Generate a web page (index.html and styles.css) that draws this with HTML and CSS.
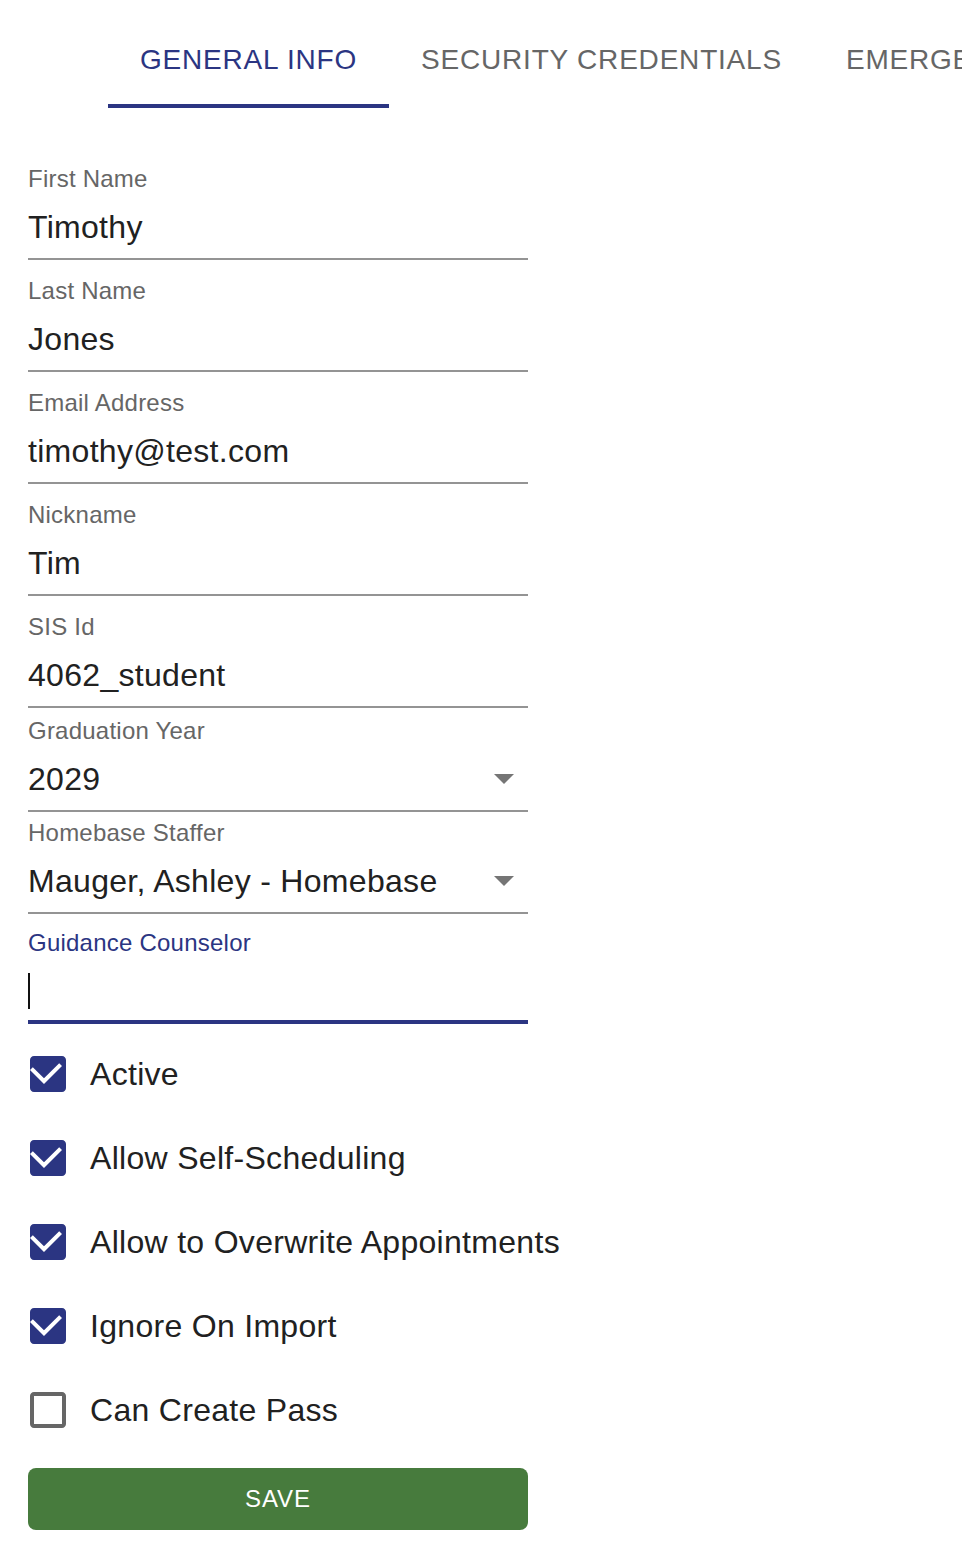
FILE: index.html
```html
<!DOCTYPE html>
<html lang="en">
<head>
<meta charset="utf-8">
<title>Edit Student</title>
<link rel="stylesheet" href="styles.css">
</head>
<body>
<div class="page">
  <nav class="tabs">
    <div class="tab tab-active">General Info</div>
    <div class="tab">Security Credentials</div>
    <div class="tab">Emergency Contacts</div>
  </nav>

  <form class="form">
    <div class="field">
      <label class="field-label">First Name</label>
      <div class="field-input">Timothy</div>
    </div>
    <div class="field">
      <label class="field-label">Last Name</label>
      <div class="field-input">Jones</div>
    </div>
    <div class="field">
      <label class="field-label">Email Address</label>
      <div class="field-input">timothy@test.com</div>
    </div>
    <div class="field">
      <label class="field-label">Nickname</label>
      <div class="field-input">Tim</div>
    </div>
    <div class="field">
      <label class="field-label">SIS Id</label>
      <div class="field-input">4062_student</div>
    </div>
    <div class="field field-select field-grad">
      <label class="field-label">Graduation Year</label>
      <div class="field-input">
        <span class="select-value">2029</span>
        <svg class="select-arrow" viewBox="7 10 10 5" width="20" height="10"><path d="M7 10l5 5 5-5z"/></svg>
      </div>
    </div>
    <div class="field field-select field-staffer">
      <label class="field-label">Homebase Staffer</label>
      <div class="field-input">
        <span class="select-value">Mauger, Ashley - Homebase</span>
        <svg class="select-arrow" viewBox="7 10 10 5" width="20" height="10"><path d="M7 10l5 5 5-5z"/></svg>
      </div>
    </div>
    <div class="field field-focused">
      <label class="field-label">Guidance Counselor</label>
      <div class="field-input"><span class="caret"></span></div>
    </div>

    <div class="checks">
      <div class="check">
        <span class="check-box">
          <svg viewBox="0 0 24 24" width="48" height="48"><path class="on" d="M19 3H5c-1.11 0-2 .9-2 2v14c0 1.1.89 2 2 2h14c1.11 0 2-.9 2-2V5c0-1.1-.89-2-2-2zm-9 14l-7-7 1.41-1.41L10 14.17l7.59-7.59L19 8l-9 9z"/></svg>
        </span>
        <span class="check-label">Active</span>
      </div>
      <div class="check">
        <span class="check-box">
          <svg viewBox="0 0 24 24" width="48" height="48"><path class="on" d="M19 3H5c-1.11 0-2 .9-2 2v14c0 1.1.89 2 2 2h14c1.11 0 2-.9 2-2V5c0-1.1-.89-2-2-2zm-9 14l-7-7 1.41-1.41L10 14.17l7.59-7.59L19 8l-9 9z"/></svg>
        </span>
        <span class="check-label">Allow Self-Scheduling</span>
      </div>
      <div class="check">
        <span class="check-box">
          <svg viewBox="0 0 24 24" width="48" height="48"><path class="on" d="M19 3H5c-1.11 0-2 .9-2 2v14c0 1.1.89 2 2 2h14c1.11 0 2-.9 2-2V5c0-1.1-.89-2-2-2zm-9 14l-7-7 1.41-1.41L10 14.17l7.59-7.59L19 8l-9 9z"/></svg>
        </span>
        <span class="check-label">Allow to Overwrite Appointments</span>
      </div>
      <div class="check">
        <span class="check-box">
          <svg viewBox="0 0 24 24" width="48" height="48"><path class="on" d="M19 3H5c-1.11 0-2 .9-2 2v14c0 1.1.89 2 2 2h14c1.11 0 2-.9 2-2V5c0-1.1-.89-2-2-2zm-9 14l-7-7 1.41-1.41L10 14.17l7.59-7.59L19 8l-9 9z"/></svg>
        </span>
        <span class="check-label">Ignore On Import</span>
      </div>
      <div class="check">
        <span class="check-box">
          <svg viewBox="0 0 24 24" width="48" height="48"><path class="off" d="M19 5v14H5V5h14m0-2H5c-1.11 0-2 .9-2 2v14c0 1.1.89 2 2 2h14c1.1 0 2-.9 2-2V5c0-1.1-.9-2-2-2z"/></svg>
        </span>
        <span class="check-label">Can Create Pass</span>
      </div>
    </div>

    <button type="button" class="save">Save</button>
  </form>
</div>
</body>
</html>
```

FILE: styles.css
```css
* {
  box-sizing: border-box;
}

html, body {
  margin: 0;
  background: #ffffff;
}

body {
  font-family: "Liberation Sans", Arial, Helvetica, sans-serif;
  color: #212121;
}

.page {
  width: 962px;
  overflow: hidden;
}

/* tab strip; the last tab runs past the right edge and is clipped */
.tabs {
  display: flex;
  margin-top: 12px;
  padding-left: 108px;
  white-space: nowrap;
  overflow: hidden;
}

.tab {
  flex: none;
  height: 96px;
  padding: 4px 32px 0;
  display: flex;
  align-items: center;
  justify-content: center;
  font-size: 28px;
  letter-spacing: 0.8px;
  text-transform: uppercase;
  color: #666666;
  border-bottom: 4px solid transparent;
}

.tab-active {
  color: #2b3582;
  border-bottom-color: #2b3582;
}

/* form */
.form {
  width: 500px;
  margin-left: 28px;
  padding-top: 56px;
  display: flex;
  flex-direction: column;
}

.field {
  display: flex;
  flex-direction: column;
  height: 96px;
  margin-bottom: 16px;
}

.field-label {
  display: block;
  height: 32px;
  padding-top: 1px;
  font-size: 24px;
  line-height: 28px;
  letter-spacing: 0.23px;
  color: #666666;
  white-space: nowrap;
}

.field-input {
  display: flex;
  align-items: center;
  height: 64px;
  padding: 8px 0;
  font-size: 32px;
  line-height: 46px;
  letter-spacing: 0.3px;
  color: #212121;
  border-bottom: 2px solid #949494;
  white-space: nowrap;
}

.field:nth-child(5) {
  margin-bottom: 8px;
}

.field-grad {
  margin-bottom: 6px;
}

.field-staffer {
  margin-bottom: 14px;
}

.select-value {
  flex: 1;
}

.select-arrow {
  flex: none;
  margin-right: 14px;
  fill: #757575;
}

.field-focused {
  margin-bottom: 8px;
}

.field-focused .field-label {
  color: #2b3582;
}

.field-focused .field-input {
  padding-bottom: 6px;
  border-bottom: 4px solid #2b3582;
}

.caret {
  display: block;
  width: 2px;
  height: 36px;
  background: #111111;
}

/* checkbox list */
.checks {
  display: flex;
  flex-direction: column;
  margin-left: -22px;
}

.check {
  display: flex;
  align-items: center;
  height: 84px;
}

.check-box {
  flex: none;
  width: 84px;
  height: 84px;
  padding: 18px;
}

.check-box svg {
  display: block;
}

.check-box .on {
  fill: #2b3582;
}

.check-box .off {
  fill: #666666;
}

.check-label {
  font-size: 32px;
  letter-spacing: 0.3px;
  color: #212121;
  white-space: nowrap;
}

/* save button */
.save {
  margin-top: 16px;
  width: 500px;
  height: 62px;
  border: 0;
  border-radius: 8px;
  background: #477b3d;
  color: #ffffff;
  font-family: inherit;
  font-size: 24px;
  letter-spacing: 1px;
  text-transform: uppercase;
  cursor: pointer;
}
```
